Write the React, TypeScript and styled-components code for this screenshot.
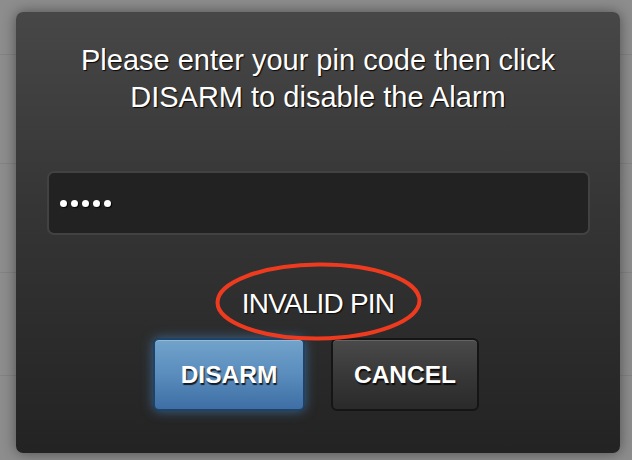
import React from "react";
import styled, { createGlobalStyle } from "styled-components";

const GlobalStyle = createGlobalStyle`
  html, body {
    margin: 0;
    padding: 0;
    background: #8d8d8d;
    font-family: "Liberation Sans", Arial, sans-serif;
  }
`;

const Page = styled.div`
  position: relative;
  width: 632px;
  height: 460px;
  overflow: hidden;
  background: #8d8d8d;
`;

const Backdrop = styled.div`
  display: flex;
  flex-direction: column;
  padding-top: 54px;
`;

const BackdropRow = styled.div<{ $h: number }>`
  height: ${(p) => p.$h}px;
  border-top: 1px solid rgba(0, 0, 0, 0.07);
  box-sizing: border-box;
`;

const Dialog = styled.div`
  position: absolute;
  left: 16px;
  top: 12px;
  width: 604px;
  height: 441px;
  box-sizing: border-box;
  padding: 30px 30px 0;
  border-radius: 7px;
  background: linear-gradient(to bottom, #474747 0%, #353535 45%, #232323 100%);
  box-shadow: 0 0 14px rgba(0, 0, 0, 0.45);
  display: flex;
  flex-direction: column;
  align-items: center;
  color: #fff;
`;

const Prompt = styled.p`
  margin: 0;
  font-size: 29px;
  line-height: 37px;
  text-align: center;
  text-shadow: 1px 1px 1px rgba(0, 0, 0, 0.9);
`;

const PinField = styled.div`
  margin-top: 55px;
  width: 543px;
  height: 64px;
  box-sizing: border-box;
  border: 2px solid #424242;
  border-radius: 7px;
  background: #222;
  display: flex;
  align-items: center;
  padding-left: 11px;
  gap: 4px;
`;

const Dot = styled.span`
  width: 7px;
  height: 7px;
  border-radius: 50%;
  background: #fff;
  box-shadow: 1px 1px 1px rgba(0, 0, 0, 0.9);
`;

const Message = styled.div`
  position: relative;
  margin-top: 52px;
  font-size: 28px;
  line-height: 34px;
  letter-spacing: -0.8px;
  text-shadow: 1px 1px 1px rgba(0, 0, 0, 0.8);
`;

const Circle = styled.svg`
  position: absolute;
  left: -27px;
  top: -25px;
  width: 207px;
  height: 79px;
  overflow: visible;
`;

const Buttons = styled.div`
  margin-top: 17px;
  margin-right: 4px;
  display: flex;
  gap: 26px;
`;

const Button = styled.button<{ $primary?: boolean; $w: number }>`
  width: ${(p) => p.$w}px;
  height: 73px;
  border-radius: 6px;
  font-family: "Liberation Sans", Arial, sans-serif;
  font-weight: bold;
  font-size: 24.5px;
  color: #fff;
  text-shadow: 1px 2px 1px rgba(0, 0, 0, 0.8);
  cursor: pointer;
  border: 2px solid ${(p) => (p.$primary ? "#1d4366" : "#151515")};
  background: ${(p) =>
    p.$primary
      ? "linear-gradient(to bottom, #72a3cb 0%, #5a8cbd 50%, #3e6ea4 100%)"
      : "linear-gradient(to bottom, #4a4a4a 0%, #383838 50%, #2a2a2a 100%)"};
  box-shadow: ${(p) =>
    p.$primary
      ? "0 0 12px rgba(80, 150, 220, 0.55), inset 0 1px 0 rgba(255,255,255,0.25)"
      : "inset 0 1px 0 rgba(255,255,255,0.15)"};
`;

export default function App() {
  return (
    <Page>
      <GlobalStyle />
      <Backdrop>
        <BackdropRow $h={109} />
        <BackdropRow $h={109} />
        <BackdropRow $h={103} />
        <BackdropRow $h={100} />
      </Backdrop>
      <Dialog>
        <Prompt>
          Please enter your pin code then click
          <br />
          DISARM to disable the Alarm
        </Prompt>
        <PinField>
          {[0, 1, 2, 3, 4].map((i) => (
            <Dot key={i} />
          ))}
        </PinField>
        <Message>
          INVALID PIN
          <Circle viewBox="0 0 207 79">
            <ellipse
              cx="103.5"
              cy="39.5"
              rx="101"
              ry="37"
              fill="none"
              stroke="#ee3b1f"
              strokeWidth="4"
              transform="rotate(-0.6 103.5 39.5)"
            />
          </Circle>
        </Message>
        <Buttons>
          <Button $primary $w={152}>DISARM</Button>
          <Button $w={148}>CANCEL</Button>
        </Buttons>
      </Dialog>
    </Page>
  );
}
